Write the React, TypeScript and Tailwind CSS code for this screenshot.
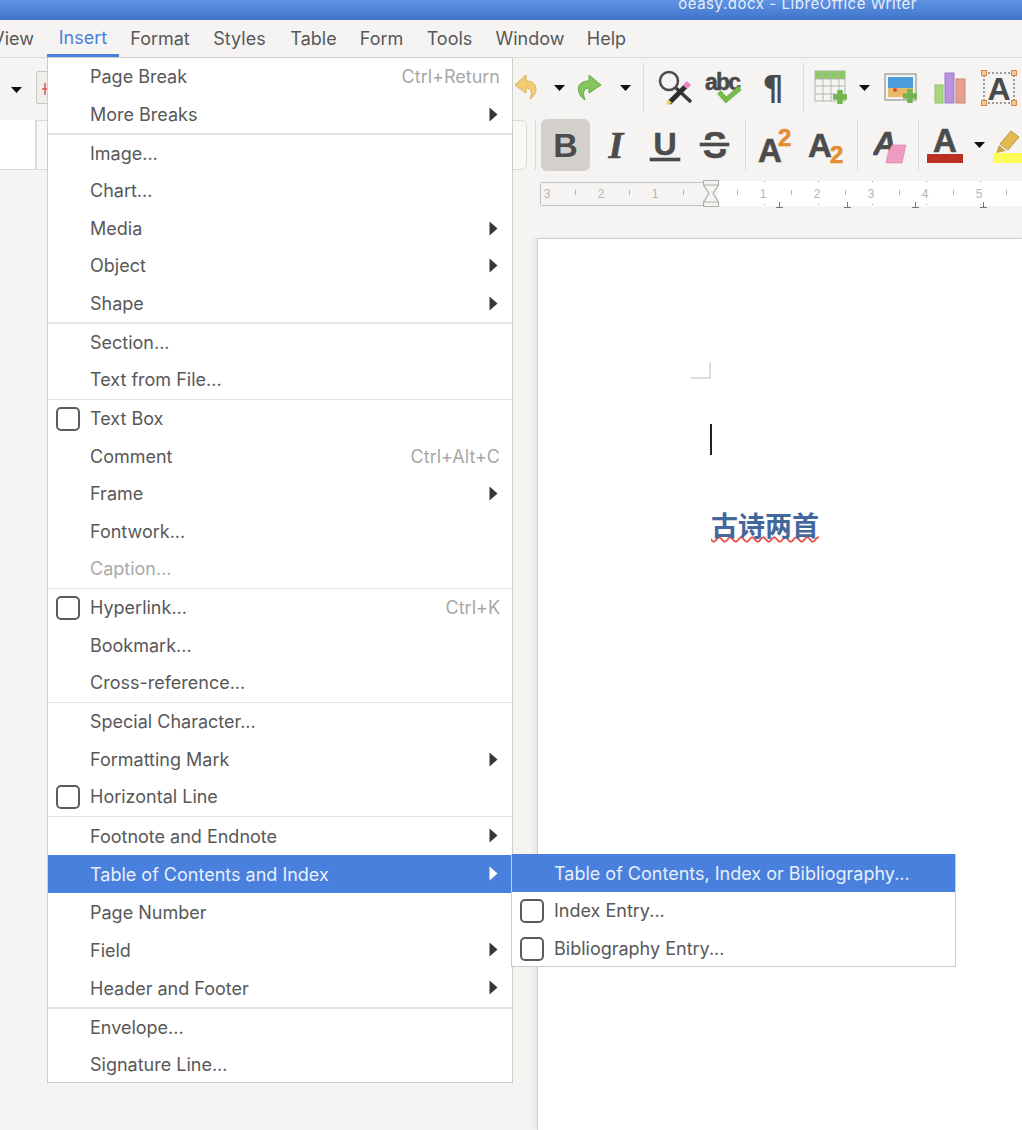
import type { ReactNode } from 'react';

type Row = {
  label: string;
  shortcut?: string;
  sub?: boolean;
  check?: boolean;
  disabled?: boolean;
  active?: boolean;
};

const insertMenu: Row[][] = [
  [{ label: 'Page Break', shortcut: 'Ctrl+Return' }, { label: 'More Breaks', sub: true }],
  [
    { label: 'Image...' },
    { label: 'Chart...' },
    { label: 'Media', sub: true },
    { label: 'Object', sub: true },
    { label: 'Shape', sub: true },
  ],
  [{ label: 'Section...' }, { label: 'Text from File...' }],
  [
    { label: 'Text Box', check: true },
    { label: 'Comment', shortcut: 'Ctrl+Alt+C' },
    { label: 'Frame', sub: true },
    { label: 'Fontwork...' },
    { label: 'Caption...', disabled: true },
  ],
  [
    { label: 'Hyperlink...', check: true, shortcut: 'Ctrl+K' },
    { label: 'Bookmark...' },
    { label: 'Cross-reference...' },
  ],
  [
    { label: 'Special Character...' },
    { label: 'Formatting Mark', sub: true },
    { label: 'Horizontal Line', check: true },
  ],
  [
    { label: 'Footnote and Endnote', sub: true },
    { label: 'Table of Contents and Index', sub: true, active: true },
    { label: 'Page Number' },
    { label: 'Field', sub: true },
    { label: 'Header and Footer', sub: true },
  ],
  [{ label: 'Envelope...' }, { label: 'Signature Line...' }],
];

const menuBar = [
  { label: 'Insert', width: 'w-[72px]' },
  { label: 'Format', width: 'w-[82px]' },
  { label: 'Styles', width: 'w-[77px]' },
  { label: 'Table', width: 'w-[71px]' },
  { label: 'Form', width: 'w-[65px]' },
  { label: 'Tools', width: 'w-[71px]' },
  { label: 'Window', width: 'w-[90px]' },
  { label: 'Help', width: 'w-[63px]' },
];

const Check = () => (
  <span className="absolute left-[8px] top-[7px] h-6 w-6 rounded-[5px] border-2 border-[#5c5c5c] bg-white" />
);

const Arrow = ({ light }: { light?: boolean }) => (
  <svg width="9" height="15" viewBox="0 0 9 15" className="absolute left-[441px] top-[11px]">
    <path d="M0.5 0.5 L8.5 7.5 L0.5 14.5 Z" fill={light ? '#ffffff' : '#33383c'} />
  </svg>
);

const Flyout = () => (
  <div className="absolute left-[463px] top-[-1px] z-10 w-[445px] border border-t-0 border-[#cfccc7] bg-white text-[#585858]">
    <div className="flex h-[38px] items-center bg-[#4a80dd] pl-[42px] text-[#e8effb]">
      Table of Contents, Index or Bibliography...
    </div>
    <div className="relative flex h-[37.5px] items-center pl-[42px]">
      <Check />
      Index Entry...
    </div>
    <div className="relative -mb-px flex h-[37.5px] items-center pl-[42px]">
      <Check />
      Bibliography Entry...
    </div>
  </div>
);

const MenuRow = ({ row, tall }: { row: Row; tall: boolean }) => (
  <div
    className={`relative flex items-center justify-between pl-[42px] pr-[12px] ${tall ? 'h-[38px]' : 'h-[37.5px]'} ${
      row.active ? 'bg-[#4a80dd] text-[#e8effb]' : row.disabled ? 'text-[#a9a9a9]' : 'text-[#585858]'
    }`}
  >
    {row.check && <Check />}
    <span>{row.label}</span>
    {row.shortcut && <span className="text-[#a8a8a8]">{row.shortcut}</span>}
    {row.sub && <Arrow light={row.active} />}
    {row.active && <Flyout />}
  </div>
);

const Caret = ({ className }: { className: string }) => (
  <svg width="11" height="6" viewBox="0 0 11 6" className={`shrink-0 ${className}`}>
    <path d="M0 0 H11 L5.5 6 Z" fill="#111" />
  </svg>
);

const Sep = ({ className }: { className: string }) => (
  <div className={`w-px shrink-0 self-center bg-[#dcdad6] ${className}`} />
);

const Undo = () => (
  <svg width="26" height="30" viewBox="0 0 26 30" className="ml-[513px] shrink-0">
    <path
      d="M13 2 L2 12 L13 20 V15 C18 15 20 19 17 26 C25 21 26 8 13 8 Z"
      fill="#f3cd74"
      stroke="#dcae4c"
      strokeLinejoin="round"
    />
  </svg>
);

const Redo = () => (
  <svg width="28" height="30" viewBox="0 0 28 30" className="ml-[9px] shrink-0">
    <path
      d="M15 2 L27 12 L15 20 V15 C10 15 8 19 11 27 C2 21 1 8 15 8 Z"
      fill="#85c45f"
      stroke="#65a845"
      strokeLinejoin="round"
    />
  </svg>
);

const FindIcon = () => (
  <svg width="34" height="36" viewBox="0 0 34 36" className="ml-[14px] shrink-0">
    <circle cx="11" cy="11" r="9" fill="none" stroke="#4a4a4a" strokeWidth="2.5" />
    <path d="M18 18 L33 32" stroke="#3a3a3a" strokeWidth="3.5" />
    <path d="M11 33 L28 16" stroke="#2e2e2e" strokeWidth="5" />
    <path d="M27 17 L31 13" stroke="#e58ac2" strokeWidth="6" />
    <path d="M8 35 L10 29 L14 33 Z" fill="#f1d35c" />
  </svg>
);

const SpellIcon = () => (
  <svg width="38" height="36" viewBox="0 0 38 36" className="ml-[13px] shrink-0">
    <text x="0" y="20" fontFamily="'Liberation Sans', sans-serif" fontWeight="700" fontSize="23" fill="#4a4a4a" stroke="#4a4a4a" strokeWidth="0.5" textLength="36">
      abc
    </text>
    <path d="M14 22 L21 30 L35 18" fill="none" stroke="#75b94f" strokeWidth="5" />
  </svg>
);

const TableIcon = () => (
  <svg width="36" height="36" viewBox="0 0 36 36" className="ml-[10px] shrink-0">
    <rect x="1" y="1" width="30" height="30" fill="#f4f4f2" stroke="#b5b5b0" />
    <rect x="1" y="1" width="30" height="8" fill="#8cc865" />
    <path d="M9 1 V31 M17 1 V31 M25 1 V31 M1 9 H31 M1 16 H31 M1 24 H31" stroke="#b5b5b0" />
    <path d="M26 20 V34 M19 27 H33" stroke="#74b44e" strokeWidth="5.5" />
  </svg>
);

const ImageIcon = () => (
  <svg width="36" height="34" viewBox="0 0 36 34" className="ml-[14px] shrink-0">
    <rect x="1" y="3" width="31" height="26" fill="#f2f2f0" stroke="#a8a8a4" strokeWidth="1.5" />
    <rect x="4" y="6" width="25" height="11" fill="#4d9bd8" />
    <rect x="4" y="17" width="25" height="9" fill="#eab866" />
    <circle cx="11" cy="19" r="2" fill="#d2553c" />
    <path d="M26 18 V32 M19 25 H33" stroke="#74b44e" strokeWidth="5.5" />
  </svg>
);

const ChartIcon = () => (
  <svg width="32" height="32" viewBox="0 0 32 32" className="ml-[14px] shrink-0">
    <rect x="1" y="13" width="8" height="18" fill="#a9d67e" stroke="#8fc264" />
    <rect x="11" y="1" width="9" height="30" fill="#b995dd" stroke="#9d78c7" />
    <rect x="22" y="7" width="9" height="24" fill="#e5a091" stroke="#cf8472" />
  </svg>
);

const TextBoxIcon = () => (
  <svg width="36" height="36" viewBox="0 0 36 36" className="ml-[15px] shrink-0">
    <rect x="3" y="3" width="30" height="30" fill="none" stroke="#444" strokeDasharray="2 2" />
    {[
      [0, 0],
      [30, 0],
      [0, 30],
      [30, 30],
    ].map(([x, y]) => (
      <rect key={`${x}-${y}`} x={x + 0.5} y={y + 0.5} width="5" height="5" fill="#f2c79a" stroke="#d98a45" />
    ))}
    <text x="18" y="30" textAnchor="middle" fontFamily="'Liberation Sans', sans-serif" fontWeight="700" fontSize="32" fill="#4a4a4a">
      A
    </text>
  </svg>
);

// bold format glyphs on the second toolbar
const FormatIcon = ({ w, children, className }: { w: number; children: ReactNode; className: string }) => (
  <svg
    width={w}
    height="40"
    viewBox={`0 0 ${w} 40`}
    className={`shrink-0 ${className}`}
    fontFamily="'Liberation Sans', sans-serif"
    fontWeight="700"
    fill="#4c4c4c"
    stroke="#4c4c4c"
    strokeWidth="0.6"
  >
    {children}
  </svg>
);

const Ruler = () => (
  <svg width="482" height="28" viewBox="0 0 482 28" className="ml-[540px] block shrink-0" fontFamily="'Liberation Sans', sans-serif" fontSize="12" fill="#b5b5b5">
    <rect x="178" y="1" width="304" height="25" fill="#ffffff" />
    <rect x="0.5" y="2.5" width="170" height="23" fill="none" stroke="#c2c0bc" rx="1" />
    {[[7, '3'], [61, '2'], [115, '1'], [223, '1'], [277, '2'], [331, '3'], [385, '4'], [439, '5']].map(([x, t]) => (
      <text key={`${x}`} x={x as number} y="18" textAnchor="middle">
        {t}
      </text>
    ))}
    {[35, 89, 143, 197, 251, 305, 359, 413, 466].map((x) => (
      <path key={x} d={`M${x + 0.5} 10 V15`} stroke="#b5b5b5" />
    ))}
    {[224, 278, 332, 386, 440].map((x) => (
      <path key={x} d={`M${x + 0.5} 1 V2 M${x + 0.5} 24 V25`} stroke="#9a9a9a" />
    ))}
    {[239, 307, 375, 443].map((x) => (
      <path key={x} d={`M${x + 0.5} 22 V27 M${x - 3} 27.5 H${x + 4}`} stroke="#777" fill="none" />
    ))}
    <path
      d="M163.5 0.5 H178.5 V5 L173 13.5 L178.5 22 V26.5 H163.5 V22 L169 13.5 L163.5 5 Z"
      fill="#f5f4f2"
      stroke="#b0aeaa"
      strokeWidth="1.2"
    />
    <path d="M163.5 5 H178.5 M163.5 22 H178.5" stroke="#b0aeaa" />
  </svg>
);

export default function App() {
  return (
    <div className="relative flex h-[1130px] w-[1022px] flex-col overflow-hidden bg-[#f5f4f2] font-['Inter',sans-serif] text-[18px]">
      {/* window title, clipped by the top of the screen */}
      <div className="flex h-[20px] shrink-0 items-end justify-end overflow-hidden bg-gradient-to-b from-[#6093e2] to-[#3f74cb] pr-[105px]">
        <span className="relative top-[-6px] whitespace-nowrap text-[15px] leading-5 tracking-[0.55px] text-[#e6eefb]">
          oeasy.docx - LibreOffice Writer
        </span>
      </div>

      <div className="flex h-[38px] shrink-0 items-stretch border-b border-[#dcdad6] text-[#585858]">
        <div className="flex w-[47px] items-center justify-end overflow-hidden pb-[1px] pr-[13px]">View</div>
        {menuBar.map((m) => (
          <div
            key={m.label}
            className={`flex items-center justify-center pb-[1px] ${m.width} ${
              m.label === 'Insert' ? 'border-b-[3px] border-[#4a80dd] pt-[2px] text-[#4a80dd]' : ''
            }`}
          >
            {m.label}
          </div>
        ))}
      </div>

      {/* standard toolbar */}
      <div className="relative flex h-[60px] shrink-0 items-center">
        <Caret className="absolute left-[11px] top-[29px]" />
        <div className="absolute left-[36px] top-[13px] h-[33px] w-[14px] rounded-[2px] border border-[#c9c7c2] bg-[#efeeec]">
          <svg width="7" height="12" viewBox="0 0 7 12" className="ml-[5px] mt-[11px]">
            <path d="M3 0 V12 M0 6 H7" stroke="#d9534f" strokeWidth="1.5" fill="none" />
          </svg>
        </div>
        <Undo />
        <Caret className="ml-[15px]" />
        <Redo />
        <Caret className="ml-[18px]" />
        <Sep className="ml-[12px] h-[50px]" />
        <FindIcon />
        <SpellIcon />
        <span className="ml-[18px] w-[24px] shrink-0 text-center font-['DejaVu_Sans',sans-serif] text-[33px] font-bold leading-none text-[#4a4a4a]">
          ¶
        </span>
        <Sep className="ml-[18px] h-[50px]" />
        <TableIcon />
        <Caret className="ml-[9px]" />
        <ImageIcon />
        <ChartIcon />
        <TextBoxIcon />
      </div>

      {/* formatting toolbar */}
      <div className="relative flex h-[54px] shrink-0 items-center">
        <div className="absolute left-0 top-[2px] h-[50px] w-[36px] border-b border-r border-[#dcdad6] bg-white" />
        <div className="absolute left-[36px] top-[2px] h-[50px] w-[491px] rounded-r-[6px] border border-[#dcdad6] bg-[#f8f8f7]" />
        <Sep className="ml-[535px] h-[50px]" />
        <div className="ml-[5px] flex h-[52px] w-[49px] shrink-0 items-center justify-center rounded-[6px] bg-[#d3d0cb]">
          <span className="font-['Liberation_Sans',sans-serif] text-[34px] font-bold leading-none text-[#4c4c4c]">B</span>
        </div>
        <FormatIcon w={24} className="ml-[14px]">
          <text x="12" y="33" textAnchor="middle" fontSize="38" fontStyle="italic" fontFamily="'Liberation Serif', serif">
            I
          </text>
        </FormatIcon>
        <FormatIcon w={32} className="ml-[21px]">
          <text x="16" y="30" textAnchor="middle" fontSize="32">
            U
          </text>
          <rect x="1" y="33" width="30" height="3" />
        </FormatIcon>
        <FormatIcon w={32} className="ml-[18px]">
          <text x="16" y="33" textAnchor="middle" fontSize="36">
            S
          </text>
          <rect x="0" y="15" width="32" height="9" fill="#f5f4f2" stroke="none" />
          <rect x="1" y="18" width="29" height="3" />
        </FormatIcon>
        <Sep className="ml-[14px] h-[50px]" />
        <FormatIcon w={36} className="ml-[12px]">
          <text x="0" y="37" fontSize="33">
            A
          </text>
          <text x="20" y="21" fontSize="24" fill="#e58c30" stroke="#e58c30">
            2
          </text>
        </FormatIcon>
        <FormatIcon w={38} className="ml-[14px]">
          <text x="0" y="32" fontSize="33">
            A
          </text>
          <text x="22" y="38" fontSize="24" fill="#e58c30" stroke="#e58c30">
            2
          </text>
        </FormatIcon>
        <Sep className="ml-[11px] h-[50px]" />
        <FormatIcon w={34} className="ml-[15px]">
          <text x="0" y="30" fontSize="33" fontStyle="italic">
            A
          </text>
          <path d="M15 28 L19 20 H33 L29 38 H13 Z" fill="#ef9cc0" stroke="#de7fa8" />
        </FormatIcon>
        <Sep className="ml-[11px] h-[50px]" />
        <FormatIcon w={38} className="ml-[7px]">
          <text x="19" y="27" textAnchor="middle" fontSize="33">
            A
          </text>
          <rect x="1" y="29" width="36" height="9" fill="#bb3023" stroke="none" />
        </FormatIcon>
        <Caret className="ml-[10px]" />
        <svg width="30" height="40" viewBox="0 0 30 40" className="ml-[8px] shrink-0">
          <path d="M7 19 L18 6 L26 12 L15 25 Z" fill="#e3b94f" stroke="#b99a45" />
          <path d="M6 20 L13 26 L3 28 Z" fill="#c9a548" />
          <rect x="0" y="28" width="30" height="10" fill="#fdfd57" />
        </svg>
      </div>

      <div className="mt-[8px] shrink-0">
        <Ruler />
      </div>

      {/* document page */}
      <div className="ml-[537px] mt-[30px] flex-1 border-l border-t border-[#cfcdc9] bg-white pl-[153px] pt-[123px] shadow-[-3px_0_5px_rgba(0,0,0,0.06)]">
        <div className="h-[17px] w-5 border-b-2 border-r-2 border-[#dcdcdc]" />
        <div className="ml-[19px] mt-[45px] h-[31px] w-[2px] bg-[#222]" />
        <div className="ml-5 mt-[52px] font-['Noto_Sans_CJK_SC',sans-serif] text-[27px] font-bold leading-[36px] text-[#44689c] underline decoration-[#e8564f] decoration-wavy decoration-2 underline-offset-[0px]">
          古诗两首
        </div>
      </div>

      {/* open Insert menu with its submenu */}
      <div className="absolute left-[47px] top-[57px] w-[466px] border border-[#cfccc7] bg-white">
        {insertMenu.map((group, i) => (
          <div key={i} className={i === insertMenu.length - 1 ? '-mb-[2px]' : ''}>
            {i > 0 && <div className="h-[1.5px] bg-[#e6e4e1]" />}
            {group.map((row) => (
              <MenuRow key={row.label} row={row} tall={i === 6} />
            ))}
          </div>
        ))}
      </div>
    </div>
  );
}
